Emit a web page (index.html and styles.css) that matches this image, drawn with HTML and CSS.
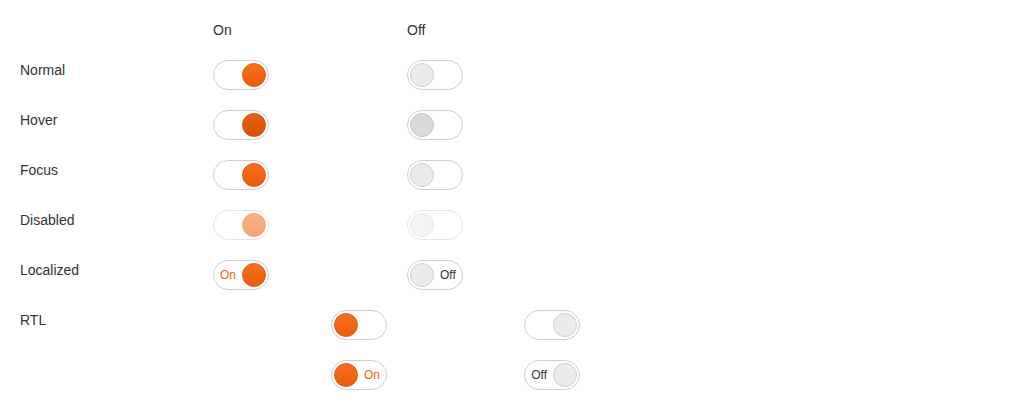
FILE: index.html
```html
<!DOCTYPE html>
<html>
<head>
<meta charset="utf-8">
<link rel="stylesheet" href="styles.css">
</head>
<body>
<div class="grid">
  <div class="label"></div>
  <div class="head">On</div>
  <div class="head">Off</div>

  <div class="label">Normal</div>
  <div class="cell"><span class="toggle on"><span class="knob"></span></span></div>
  <div class="cell"><span class="toggle off"><span class="knob"></span></span></div>

  <div class="label">Hover</div>
  <div class="cell"><span class="toggle on hover"><span class="knob"></span></span></div>
  <div class="cell"><span class="toggle off hover"><span class="knob"></span></span></div>

  <div class="label">Focus</div>
  <div class="cell"><span class="toggle on"><span class="knob"></span></span></div>
  <div class="cell"><span class="toggle off"><span class="knob"></span></span></div>

  <div class="label">Disabled</div>
  <div class="cell"><span class="toggle on disabled"><span class="knob"></span></span></div>
  <div class="cell"><span class="toggle off disabled"><span class="knob"></span></span></div>

  <div class="label">Localized</div>
  <div class="cell"><span class="toggle on"><span class="text">On</span><span class="knob"></span></span></div>
  <div class="cell"><span class="toggle off"><span class="knob"></span><span class="text">Off</span></span></div>

  <div class="label">RTL</div>
  <div class="cell rtl"><span class="toggle on"><span class="knob"></span></span></div>
  <div class="cell rtl"><span class="toggle off"><span class="knob"></span></span></div>

  <div class="label"></div>
  <div class="cell rtl"><span class="toggle on"><span class="text">On</span><span class="knob"></span></span></div>
  <div class="cell rtl"><span class="toggle off"><span class="knob"></span><span class="text">Off</span></span></div>
</div>
</body>
</html>
```
FILE: styles.css
```css
html, body {
  margin: 0;
  padding: 0;
  background: #fff;
}
body {
  font-family: "Liberation Sans", Arial, sans-serif;
  font-size: 14px;
  color: #333;
}
.grid {
  display: grid;
  grid-template-columns: 193px 194px 193px;
  row-gap: 20px;
  padding: 20px;
  align-items: start;
}
.head, .label {
  line-height: 20px;
}
.cell {
  display: flex;
  padding-right: 20px;
}
.cell.rtl {
  direction: rtl;
}
.toggle {
  box-sizing: border-box;
  display: inline-flex;
  align-items: center;
  gap: 6px;
  width: 56px;
  height: 30px;
  padding: 0 2px;
  border: 1px solid #cfcfcf;
  border-radius: 15px;
  background: #fff;
  font-size: 12px;
}
.toggle.on {
  justify-content: flex-end;
}
.toggle.off {
  justify-content: flex-start;
}
.toggle.on .text {
  color: #f06510;
}
.toggle.off .text {
  color: #333;
}
.knob {
  box-sizing: border-box;
  width: 24px;
  height: 24px;
  border-radius: 50%;
  flex: none;
}
.on .knob {
  background: linear-gradient(#f86f1f, #ea5c0c);
  border: 1px solid #e25a0e;
}
.on.hover .knob {
  background: linear-gradient(#e8600f, #d85206);
  border-color: #d35208;
}
.off .knob {
  background: #ebebeb;
  border: 1px solid #cfcfcf;
}
.off.hover .knob {
  background: #dadada;
  border-color: #c8c8c8;
}
.toggle.disabled {
  opacity: 0.55;
}
```
